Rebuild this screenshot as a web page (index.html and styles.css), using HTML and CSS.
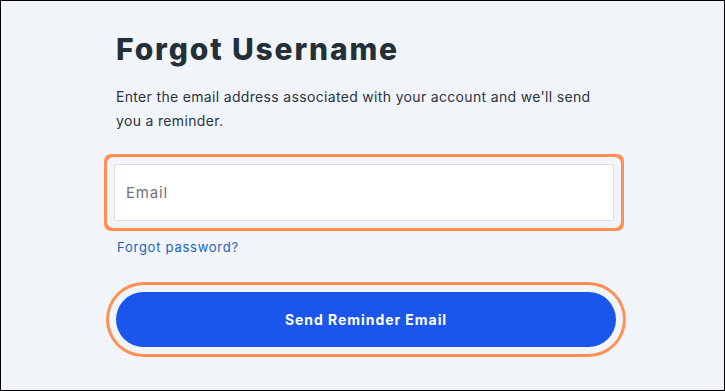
FILE: index.html
```html
<!DOCTYPE html>
<html lang="en">
<head>
<meta charset="utf-8">
<title>Forgot Username</title>
<link rel="stylesheet" href="styles.css">
</head>
<body>
<div class="page">
  <form class="form">
    <h1 class="title">Forgot Username</h1>
    <p class="intro">Enter the email address associated with your account and we'll send you a reminder.</p>
    <div class="field">
      <input class="input" type="email" placeholder="Email">
    </div>
    <a class="link" href="#">Forgot password?</a>
    <button class="btn" type="button">Send Reminder Email</button>
  </form>
</div>
</body>
</html>
```
FILE: styles.css
```css
html, body {
  margin: 0;
  padding: 0;
}
body {
  font-family: "Inter", "Liberation Sans", sans-serif;
  background: #f1f5f9;
}
.page {
  box-sizing: border-box;
  width: 725px;
  height: 391px;
  border: 1px solid #000;
  background: #f1f5f9;
  padding: 28px 0 0 113px;
}
.form {
  width: 502px;
  display: flex;
  flex-direction: column;
  align-items: flex-start;
}
.title {
  margin: 0 0 0 2px;
  font-size: 30px;
  line-height: 40px;
  font-weight: 800;
  color: #243038;
  letter-spacing: 1.85px;
}
.intro {
  margin: 16px 0 0 2px;
  width: 484px;
  font-size: 14px;
  line-height: 24px;
  color: #2b3440;
  letter-spacing: 0.33px;
}
.field {
  margin-top: 31px;
  margin-left: 0;
}
.input {
  box-sizing: border-box;
  display: block;
  width: 500px;
  height: 57px;
  border: 1px solid #dcdcdc;
  border-radius: 2px;
  background: #fff;
  padding: 0 11px;
  font-family: inherit;
  font-size: 15px;
  letter-spacing: 0.8px;
  color: #333;
  outline: none;
  box-shadow: 0 0 0 7px #f1f5f9, 0 0 0 10px #ff8f55;
}
.input::placeholder {
  color: #6f7279;
}
.link {
  margin: 17px 0 0 3px;
  font-size: 13px;
  line-height: 18px;
  color: #1c62c2;
  letter-spacing: 0.75px;
  text-decoration: none;
}
.btn {
  margin: 36px 0 0 2px;
  width: 500px;
  height: 55px;
  border: none;
  border-radius: 28px;
  background: #1a56eb;
  color: #fff;
  font-family: inherit;
  font-size: 14px;
  font-weight: 700;
  letter-spacing: 0.95px;
  box-shadow: 0 0 0 7px #f1f5f9, 0 0 0 10px #ff8f55;
  cursor: pointer;
}
```
